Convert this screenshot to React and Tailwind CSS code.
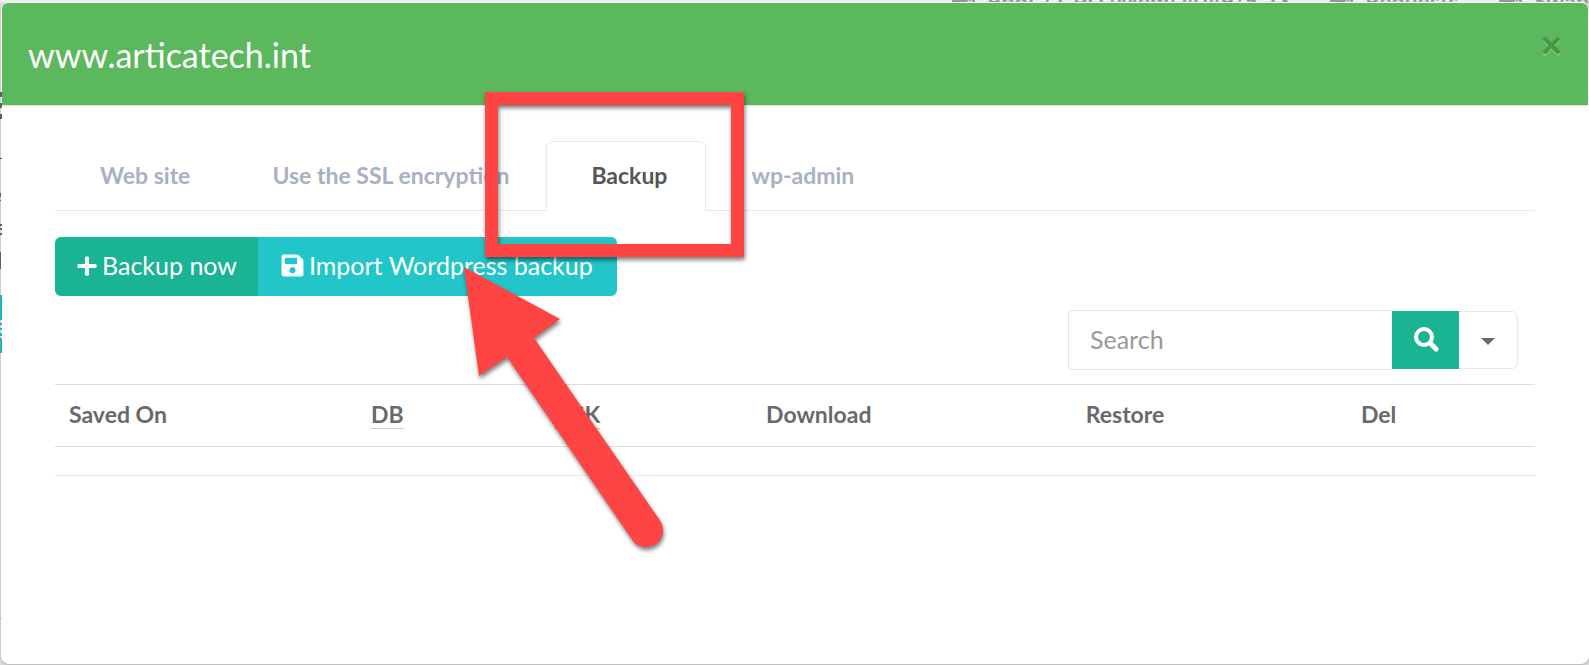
import { FaPlus, FaSave, FaServer } from "react-icons/fa";

const tabs = [
  { title: "Web site" },
  { title: "Use the SSL encryption" },
  { title: "Backup", active: true },
  { title: "wp-admin" },
];

const columns = [
  { title: "Saved On", width: "w-[20.4%]" },
  { title: "DB", width: "w-[12.4%]", sortable: true },
  { title: "DSK", width: "w-[14.3%]", sortable: true },
  { title: "Download", width: "w-[21.6%]" },
  { title: "Restore", width: "w-[18.6%]" },
  { title: "Del", width: "w-[12.7%]" },
];

const stats = ["Root / CPU (Mem) 4049/5.23", "Requests", "Swap"];

// Page behind the dialog, only its edges can be seen
const PageEdges = () => (
  <div className="absolute inset-0 bg-[#dcdcdc]">
    <div className="flex h-[3px] items-center justify-end gap-10 overflow-hidden bg-[#f3f3f4] text-[23px] font-bold text-[#98999d]">
      {stats.map((stat) => (
        <span key={stat} className="flex items-center gap-3 whitespace-nowrap">
          <FaServer />
          {stat}
        </span>
      ))}
    </div>
  </div>
);

const SideSliver = () => (
  <svg
    className="absolute left-0 top-0"
    width="2"
    height="665"
    shapeRendering="crispEdges"
    aria-hidden="true"
  >
    <g fill="#5f6064">
      <rect y="92" width="2" height="5" />
      <rect y="103" width="2" height="5" />
      <rect y="114" width="2" height="5" />
      <rect y="158" width="2" height="1" />
      <rect y="193" width="1" height="4" />
      <rect y="200" width="1" height="1" />
      <rect y="224" width="2" height="2" />
      <rect y="228" width="2" height="2" />
      <rect y="233" width="2" height="2" />
      <rect y="252" width="1" height="17" />
    </g>
    <g fill="#23b5b8">
      <rect y="295" width="2" height="25" />
      <rect y="323" width="2" height="2" />
      <rect y="328" width="2" height="2" />
      <rect y="333" width="2" height="3" />
      <rect y="338" width="2" height="15" />
    </g>
    <rect y="618" width="2" height="1" fill="#c4c4c4" />
  </svg>
);

const Header = () => (
  <header className="flex h-[103px] items-start justify-between rounded-t-md border-b border-[#e5e5e5] bg-[#5cb85c] pr-[27px] pl-[26px]">
    <h4 className="pt-7 text-[34px] leading-[48px] font-normal text-white">
      www.articatech.int
    </h4>
    <button type="button" aria-label="Close" className="mt-[34px]">
      <svg width="19" height="19" viewBox="0 0 19 19" fill="none">
        <path d="M2 3L17 18M17 3L2 18" stroke="#8ccd8c" strokeWidth="3" />
        <path d="M2 1L17 16M17 1L2 16" stroke="#4a934a" strokeWidth="4" />
      </svg>
    </button>
  </header>
);

const Tabs = () => (
  <nav className="flex h-[70px] border-b border-[#e7eaec] text-[23px] leading-[66px] font-bold">
    {tabs.map((tab) => (
      <a
        key={tab.title}
        href="#"
        className={
          tab.active
            ? "h-[70px] rounded-t-md border border-b-0 border-[#e7eaec] bg-white pr-[38px] pl-11 text-[#555555]"
            : "border border-transparent pr-9 pl-11 text-[#a7b1c2]"
        }
      >
        {tab.title}
      </a>
    ))}
  </nav>
);

const Actions = () => (
  <div className="mt-[26px] flex text-[25px] text-white">
    <button
      type="button"
      className="flex h-[59px] items-center gap-1 rounded-l-md bg-[#1ab394] px-[21px] pb-[2px]"
    >
      <FaPlus size={22} />
      Backup now
    </button>
    <button
      type="button"
      className="flex h-[59px] items-center gap-1 rounded-r-md bg-[#23c6c8] pr-6 pb-[2px] pl-[22px]"
    >
      <FaSave size={25} />
      Import Wordpress backup
    </button>
  </div>
);

const SearchBar = () => (
  <div className="mt-[14px] mr-[17px] flex items-center justify-end">
    <input
      type="text"
      aria-label="Search"
      placeholder="Search"
      className="h-[60px] w-[324px] rounded-l-xs border border-r-0 border-[#e5e6e7] bg-white px-[21px] pb-[2px] text-[25px] text-[#676a6c] outline-none placeholder:text-[#999999]"
    />
    <button
      type="button"
      aria-label="Run search"
      className="flex h-[58px] w-[67px] items-center justify-center bg-[#1ab394] pb-[2px]"
    >
      <svg width="26" height="26" viewBox="0 0 26 26" fill="none" stroke="#fff">
        <circle cx="11" cy="11" r="8" strokeWidth="4" />
        <path d="M17 17L23 23" strokeWidth="5" strokeLinecap="round" />
      </svg>
    </button>
    <button
      type="button"
      aria-label="Search options"
      className="flex h-[58px] w-[59px] items-center justify-center rounded-r-md border border-l-0 border-[#e7eaec] bg-white pt-[2px]"
    >
      <svg width="14" height="8" viewBox="0 0 14 8" fill="#676a6c">
        <path d="M0 1H14L7 8Z" />
      </svg>
    </button>
  </div>
);

const BackupTable = () => (
  <table className="mt-[14px] w-full table-fixed border-collapse text-left text-[23px] text-[#676a6c]">
    <thead>
      <tr className="h-[62px] border-t border-b border-[#dddddd]">
        {columns.map((col) => (
          <th
            key={col.title}
            className={`${col.width} px-[14px] pt-0 pb-[2px] font-bold`}
          >
            {col.sortable ? (
              <span className="inline-block border-b border-[#cccccc] leading-7">
                {col.title}
              </span>
            ) : (
              col.title
            )}
          </th>
        ))}
      </tr>
    </thead>
    <tbody>
      <tr className="h-[29px] border-b border-[#e7e7e7]">
        <td colSpan={6}></td>
      </tr>
    </tbody>
  </table>
);

// Red frame round the active tab and the arrow to the import button
const Callout = () => (
  <div className="pointer-events-none absolute left-[464px] top-[92px]">
    <div className="ml-[21px] h-[165px] w-[259px] border-[13px] border-[#ff4444] drop-shadow-[1px_3px_2px_rgba(0,0,0,0.5)]"></div>
    <svg
      className="absolute left-0 top-[175px] overflow-visible drop-shadow-[1px_3px_2px_rgba(0,0,0,0.5)]"
      width="200"
      height="282"
      viewBox="0 0 200 282"
      fill="#ff4444"
    >
      <path d="M0 0L96 52L70 71L197 255A17 17 0 0 1 169 274L43 90L15 109Z" />
    </svg>
  </div>
);

const App = () => {
  return (
    <div className="relative flex min-h-screen flex-col overflow-hidden font-['Lato',sans-serif]">
      <PageEdges />
      <div className="relative mt-[2px] mb-px ml-px flex grow flex-col rounded-lg border border-white bg-white shadow-[0_1px_3px_rgba(0,0,0,0.2)]">
        <Header />
        <main className="px-[53px] pt-[35px]">
          <Tabs />
          <Actions />
          <SearchBar />
          <BackupTable />
        </main>
      </div>
      <SideSliver />
      <Callout />
    </div>
  );
};

export default App;
